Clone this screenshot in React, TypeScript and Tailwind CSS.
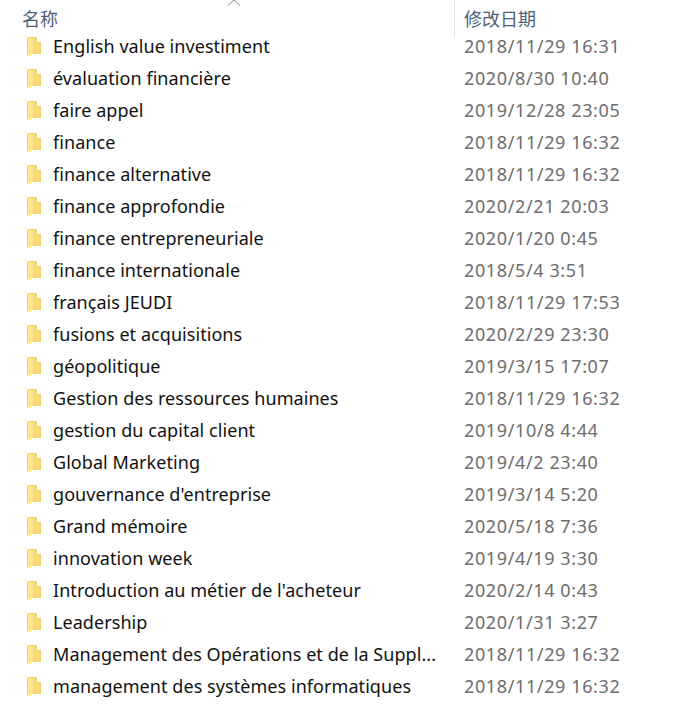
const rows: [string, string][] = [
  ['English value investiment', '2018/11/29 16:31'],
  ['évaluation financière', '2020/8/30 10:40'],
  ['faire appel', '2019/12/28 23:05'],
  ['finance', '2018/11/29 16:32'],
  ['finance alternative', '2018/11/29 16:32'],
  ['finance approfondie', '2020/2/21 20:03'],
  ['finance entrepreneuriale', '2020/1/20 0:45'],
  ['finance internationale', '2018/5/4 3:51'],
  ['français JEUDI', '2018/11/29 17:53'],
  ['fusions et acquisitions', '2020/2/29 23:30'],
  ['géopolitique', '2019/3/15 17:07'],
  ['Gestion des ressources humaines', '2018/11/29 16:32'],
  ['gestion du capital client', '2019/10/8 4:44'],
  ['Global Marketing', '2019/4/2 23:40'],
  ["gouvernance d'entreprise", '2019/3/14 5:20'],
  ['Grand mémoire', '2020/5/18 7:36'],
  ['innovation week', '2019/4/19 3:30'],
  ["Introduction au métier de l'acheteur", '2020/2/14 0:43'],
  ['Leadership', '2020/1/31 3:27'],
  ['Management des Opérations et de la Suppl...', '2018/11/29 16:32'],
  ['management des systèmes informatiques', '2018/11/29 16:32'],
]

function FolderIcon() {
  return (
    <svg width="16" height="21" viewBox="0 0 16 21" className="shrink-0">
      <path d="M2 1 H11 V6 H15 V18 H2 Z" fill="#f4cb62" />
      <path d="M7 2 H10.5 V6.5 H14.5 V17.5 H7 Z" fill="#fad978" />
      <path d="M1 2 L7 0.5 V18 L2.5 20.5 L1 19.5 Z" fill="#fce594" />
      <path d="M1 2 L7 0.5 V1.5 L2 3 V20 L1 19.5 Z" fill="#ecd38b" />
    </svg>
  )
}

export default function App() {
  return (
    <div className="relative h-[704px] w-[679px] overflow-hidden bg-white font-['Noto_Sans','Noto_Sans_CJK_SC',sans-serif]">
      <svg width="14" height="6" viewBox="0 0 14 6" className="absolute left-[227px] top-0">
        <path d="M1 5.5 L7 0 L13 5.5" fill="none" stroke="#8a8a8a" strokeWidth="1" />
      </svg>

      <div className="-mb-2 flex h-[38px]">
        <div className="w-[455px] border-r border-[#e5e5e5] pl-[22px] pt-[7px] text-[18px] leading-6 text-[#4c607a]">名称</div>
        <div className="pl-[9px] pt-[7px] text-[18px] leading-6 text-[#4c607a]">修改日期</div>
      </div>

      <div className="flex flex-col">
        {rows.map(([name, date]) => (
          <div key={name} className="flex h-8 items-center">
            <div className="flex w-[464px] items-center pl-[26px]">
              <FolderIcon />
              <span className="ml-[11px] max-w-[392px] truncate text-[18px] tracking-[0.06px] text-[#111111]">{name}</span>
            </div>
            <span className="text-[18px] tracking-[0.62px] text-[#6d6d6d]">{date}</span>
          </div>
        ))}
      </div>
    </div>
  )
}
